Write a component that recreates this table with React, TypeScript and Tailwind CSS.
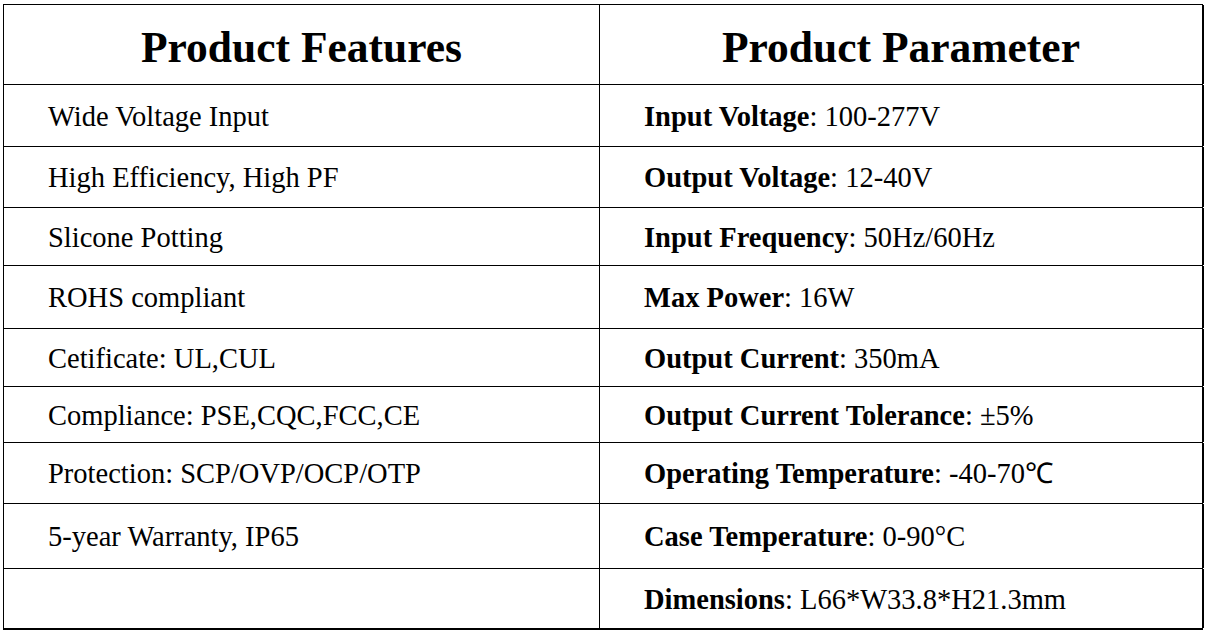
const rows: { h: string; left: string; key?: string; value?: string }[] = [
  { h: "h-[62px]", left: "Wide Voltage Input", key: "Input Voltage", value: ": 100-277V" },
  { h: "h-[61px]", left: "High Efficiency, High PF", key: "Output Voltage", value: ": 12-40V" },
  { h: "h-[58px]", left: "Slicone Potting", key: "Input Frequency", value: ": 50Hz/60Hz" },
  { h: "h-[63px]", left: "ROHS compliant", key: "Max Power", value: ": 16W" },
  { h: "h-[58px]", left: "Cetificate: UL,CUL", key: "Output Current", value: ": 350mA" },
  { h: "h-[56px]", left: "Compliance: PSE,CQC,FCC,CE", key: "Output Current Tolerance", value: ": ±5%" },
  { h: "h-[61px]", left: "Protection: SCP/OVP/OCP/OTP", key: "Operating Temperature", value: ": -40-70℃" },
  { h: "h-[65px]", left: "5-year Warranty, IP65", key: "Case Temperature", value: ": 0-90°C" },
  { h: "h-[61px]", left: "", key: "Dimensions", value: ": L66*W33.8*H21.3mm" },
];

export default function App() {
  return (
    <div className="w-[1205px] h-[630px] bg-white overflow-hidden pt-[4px] pl-[3px] text-black" style={{ fontFamily: '"Liberation Serif", "Times New Roman", serif' }}>
      <div className="w-[1200px] border-t border-l border-black">
        <div className="grid grid-cols-[596px_604px] h-[80px] border-b border-black">
          <div className="flex items-center justify-center pt-[6px] border-r border-black text-[43.5px] font-bold">Product Features</div>
          <div className="flex items-center justify-center pt-[6px] border-r-2 border-black text-[43.5px] font-bold">Product Parameter</div>
        </div>
        {rows.map((r, i) => (
          <div key={i} className={`grid grid-cols-[596px_604px] border-b border-black ${r.h} ${i === rows.length - 1 ? "border-b-2" : ""}`}>
            <div className="flex items-center pl-[44px] pt-[3px] border-r border-black text-[28.5px]">{r.left}</div>
            <div className="flex items-center pl-[44px] pt-[3px] border-r-2 border-black text-[28.5px] whitespace-pre">
              <span className="font-bold">{r.key}</span>
              <span>{r.value}</span>
            </div>
          </div>
        ))}
      </div>
    </div>
  );
}
